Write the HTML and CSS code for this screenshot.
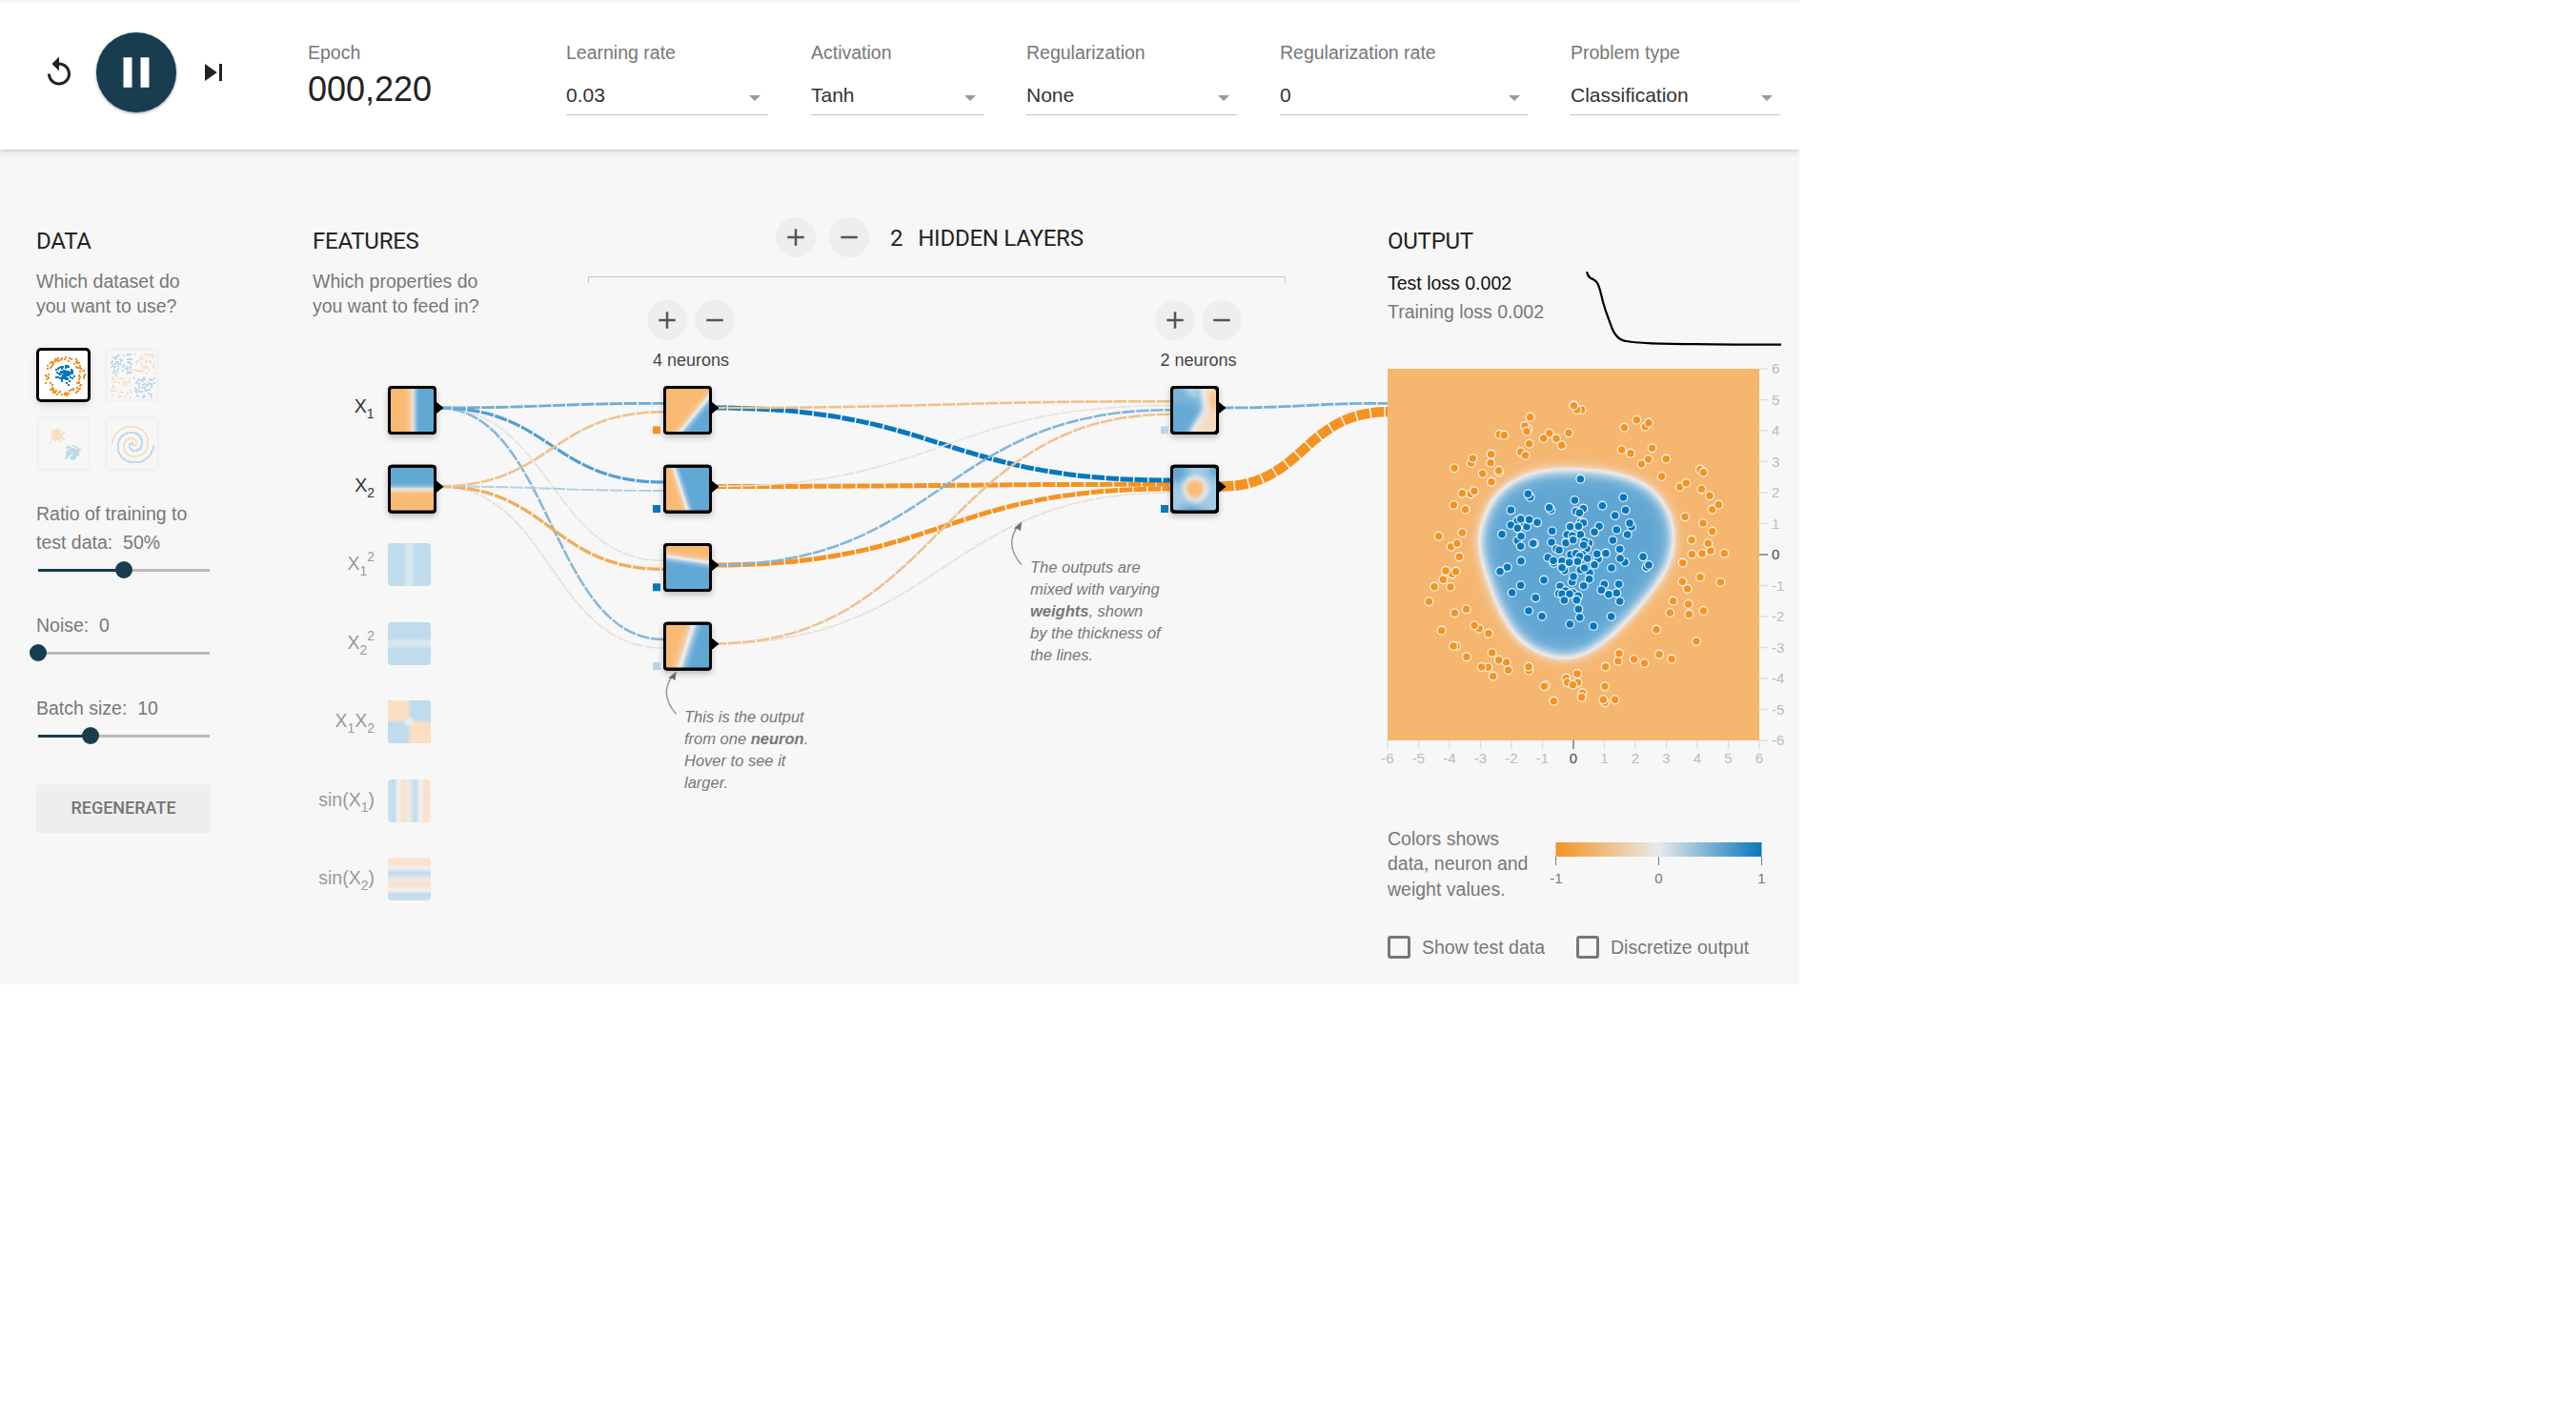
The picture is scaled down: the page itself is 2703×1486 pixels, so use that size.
FILE: index.html
```html
<!DOCTYPE html>
<html lang="en">
<head>
<meta charset="utf-8">
<title>Neural Network Playground</title>
<link rel="stylesheet" href="styles.css">
</head>
<body>
<div class="app">
  <header class="topbar">
    <div class="controls">
      <svg class="icon" viewBox="0 0 24 24"><path d="M12 5V1L7 6l5 5V7c3.31 0 6 2.69 6 6s-2.69 6-6 6-6-2.69-6-6H4c0 4.42 3.58 8 8 8s8-3.58 8-8-3.58-8-8-8z"/></svg>
      <div class="play"><svg viewBox="0 0 24 24"><path d="M6 19h4V5H6v14zm8-14v14h4V5h-4z"/></svg></div>
      <svg class="icon" viewBox="0 0 24 24"><path d="M6 18l8.5-6L6 6v12zM16 6v12h2V6h-2z"/></svg>
    </div>
    <div class="epoch"><span class="label">Epoch</span><span class="count">000,220</span></div>
    <div class="field f-rate"><span class="label">Learning rate</span><div class="select">0.03</div></div>
    <div class="field f-act"><span class="label">Activation</span><div class="select">Tanh</div></div>
    <div class="field f-reg"><span class="label">Regularization</span><div class="select">None</div></div>
    <div class="field f-regrate"><span class="label">Regularization rate</span><div class="select">0</div></div>
    <div class="field f-problem"><span class="label">Problem type</span><div class="select">Classification</div></div>
  </header>

  <main class="main">
    <svg class="network" viewBox="0 157 1456 876">
      <defs>
        <linearGradient id="gx1"><stop offset=".3" stop-color="#f9ba74"/><stop offset=".42" stop-color="#f4c690"/><stop offset=".52" stop-color="#eedfd0"/><stop offset=".57" stop-color="#a5cbe3"/><stop offset=".65" stop-color="#62a8d5"/></linearGradient>
        <linearGradient id="gx2" x2="0" y2="1"><stop offset=".37" stop-color="#62a8d5"/><stop offset=".44" stop-color="#90bfdd"/><stop offset=".5" stop-color="#e6e4e0"/><stop offset=".56" stop-color="#f3cfa4"/><stop offset=".63" stop-color="#f9ba74"/></linearGradient>
        <linearGradient id="gsq"><stop offset=".37" stop-color="#bfdbec"/><stop offset=".44" stop-color="#d7e7ee"/><stop offset=".55" stop-color="#d7e7ee"/><stop offset=".63" stop-color="#bfdbec"/></linearGradient>
        <linearGradient id="gsq2" x2="0" y2="1"><stop offset=".37" stop-color="#bfdbec"/><stop offset=".44" stop-color="#d7e7ee"/><stop offset=".55" stop-color="#d7e7ee"/><stop offset=".63" stop-color="#bfdbec"/></linearGradient>
        <linearGradient id="gsin"><stop offset="0" stop-color="#cee1ed"/><stop offset=".14" stop-color="#bfdbec"/><stop offset=".24" stop-color="#f2f2f2"/><stop offset=".35" stop-color="#fae0c7"/><stop offset=".49" stop-color="#efeae4"/><stop offset=".64" stop-color="#bfdbec"/><stop offset=".75" stop-color="#eff2f3"/><stop offset=".87" stop-color="#fae0c7"/><stop offset="1" stop-color="#f8e6d4"/></linearGradient>
        <linearGradient id="gsin2" x1="0" x2="0" y1="1" y2="0"><stop offset="0" stop-color="#cee1ed"/><stop offset=".14" stop-color="#bfdbec"/><stop offset=".24" stop-color="#f2f2f2"/><stop offset=".35" stop-color="#fae0c7"/><stop offset=".49" stop-color="#efeae4"/><stop offset=".64" stop-color="#bfdbec"/><stop offset=".75" stop-color="#eff2f3"/><stop offset=".87" stop-color="#fae0c7"/><stop offset="1" stop-color="#f8e6d4"/></linearGradient>
        <linearGradient id="gn1" gradientUnits="userSpaceOnUse" x1="24.5" y1="22" x2="35.5" y2="31"><stop offset="0" stop-color="#f9ba74"/><stop offset=".3" stop-color="#f4caa0"/><stop offset=".5" stop-color="#efefef"/><stop offset=".75" stop-color="#8dbede"/><stop offset="1" stop-color="#62a8d5"/></linearGradient>
        <linearGradient id="gn2" gradientUnits="userSpaceOnUse" x1="9" y1="24.5" x2="21.5" y2="20.5"><stop offset="0" stop-color="#f9ba74"/><stop offset=".3" stop-color="#f4caa0"/><stop offset=".5" stop-color="#efefef"/><stop offset=".75" stop-color="#8dbede"/><stop offset="1" stop-color="#62a8d5"/></linearGradient>
        <linearGradient id="gn3" gradientUnits="userSpaceOnUse" x1="23.5" y1="7" x2="21.5" y2="21"><stop offset="0" stop-color="#f9ba74"/><stop offset=".3" stop-color="#f4caa0"/><stop offset=".5" stop-color="#efefef"/><stop offset=".75" stop-color="#8dbede"/><stop offset="1" stop-color="#62a8d5"/></linearGradient>
        <linearGradient id="gn4" gradientUnits="userSpaceOnUse" x1="12" y1="19" x2="31" y2="25"><stop offset="0" stop-color="#f9ba74"/><stop offset=".3" stop-color="#f4caa0"/><stop offset=".5" stop-color="#efefef"/><stop offset=".75" stop-color="#8dbede"/><stop offset="1" stop-color="#62a8d5"/></linearGradient>
        <clipPath id="tile"><rect width="45" height="45" rx="3"/></clipPath>
        <filter id="b1" x="-50%" y="-50%" width="200%" height="200%"><feGaussianBlur stdDeviation="1.2"/></filter>
        <filter id="b2" x="-50%" y="-50%" width="200%" height="200%"><feGaussianBlur stdDeviation="2.4"/></filter>
        <filter id="b4" x="-80%" y="-80%" width="260%" height="260%"><feGaussianBlur stdDeviation="5"/></filter>
        <filter id="drop" x="-30%" y="-30%" width="160%" height="170%"><feDropShadow dx="0" dy="3" stdDeviation="3" flood-opacity=".25"/></filter>
        <g id="frame"><rect x="-1.5" y="-1.5" width="48" height="48" rx="3" fill="none" stroke="#000" stroke-width="3"/><path d="M47.500 13.500l8 6.500-8 6.500z"/></g>
        <rect id="base" x="-3" y="-3" width="51" height="51" rx="4" filter="url(#drop)"/>
      </defs>

      <g class="links">
        <path d="M1281 510.5C1368 510.5 1368 432.3 1456 432.3" stroke="#f59322" stroke-width="10.5"/>
        <path d="M1281 428C1368 428 1368 423.3 1456 423.3" stroke="#74b0d6" stroke-width="2.8"/>
        <path d="M749 675.5C989 675.5 989 517 1228 517" stroke="#eadfd3" stroke-width="1.7"/>
        <path d="M749 593C989 593 989 513 1228 513" stroke="#f59322" stroke-width="5"/>
        <path d="M749 510.5C989 510.5 989 508.3 1228 508.3" stroke="#f59322" stroke-width="5"/>
        <path d="M749 428C989 428 989 504 1228 504" stroke="#0877bd" stroke-width="5"/>
        <path d="M749 675.5C989 675.5 989 434.7 1228 434.7" stroke="#efc290" stroke-width="2.6"/>
        <path d="M749 593C989 593 989 430.2 1228 430.2" stroke="#82b6d8" stroke-width="2.6"/>
        <path d="M749 510.5C989 510.5 989 425.6 1228 425.6" stroke="#e9e0d6" stroke-width="1.6"/>
        <path d="M749 428C989 428 989 421.2 1228 421.2" stroke="#efc087" stroke-width="2.6"/>
        <path d="M460 510.5C578 510.5 578 680 696 680" stroke="#eadfd3" stroke-width="1.7"/>
        <path d="M460 428C578 428 578 671 696 671" stroke="#85b8d9" stroke-width="2.6"/>
        <path d="M460 510.5C578 510.5 578 597.3 696 597.3" stroke="#f2ab5c" stroke-width="3.3"/>
        <path d="M460 428C578 428 578 588.3 696 588.3" stroke="#e9e0d6" stroke-width="1.6"/>
        <path d="M460 510.5C578 510.5 578 515 696 515" stroke="#b0cfe1" stroke-width="1.9"/>
        <path d="M460 428C578 428 578 506 696 506" stroke="#519fd0" stroke-width="3.2"/>
        <path d="M460 510.5C578 510.5 578 432.3 696 432.3" stroke="#eec290" stroke-width="2.6"/>
        <path d="M460 428C578 428 578 423.3 696 423.3" stroke="#6eadd5" stroke-width="2.8"/>
      </g>

      <g transform="translate(410 408)"><use href="#base"/><rect width="45" height="45" fill="url(#gx1)"/><use href="#frame"/></g>
      <g transform="translate(410 490.7)"><use href="#base"/><rect width="45" height="45" fill="url(#gx2)"/><use href="#frame"/></g>
      <rect x="407" y="570" width="45" height="45" rx="4" fill="url(#gsq)"/>
      <rect x="407" y="653" width="45" height="45" rx="4" fill="url(#gsq2)"/>
      <g transform="translate(407 735)" clip-path="url(#tile)">
        <rect width="45" height="45" fill="#bfdbec"/>
        <g filter="url(#b1)"><path d="M-5-5h27.500v27.500h-27.500zM22.500 22.500h28v28h-28z" fill="#fadfc2"/></g>
        <circle cx="22.500" cy="22.500" r="4.500" fill="#ecebea" filter="url(#b1)"/>
      </g>
      <rect x="407" y="818" width="45" height="45" rx="4" fill="url(#gsin)"/>
      <rect x="407" y="900" width="45" height="45" rx="4" fill="url(#gsin2)"/>

      <g class="feature-names">
        <text x="392.500" y="432.700" class="on">X<tspan dy="6" class="small">1</tspan></text>
        <text x="393" y="515.700" class="on">X<tspan dy="6" class="small">2</tspan></text>
        <text x="393" y="598">X<tspan dy="6" class="small">1</tspan><tspan dy="-15" class="small">2</tspan></text>
        <text x="393" y="681">X<tspan dy="6" class="small">2</tspan><tspan dy="-15" class="small">2</tspan></text>
        <text x="393" y="763">X<tspan dy="6" class="small">1</tspan><tspan dy="-6">X</tspan><tspan dy="6" class="small">2</tspan></text>
        <text x="393" y="846">sin(X<tspan dy="6" class="small">1</tspan><tspan dy="-6">)</tspan></text>
        <text x="393" y="928">sin(X<tspan dy="6" class="small">2</tspan><tspan dy="-6">)</tspan></text>
      </g>

      <g transform="translate(699 408)"><use href="#base"/><rect width="45" height="45" fill="url(#gn1)"/><use href="#frame"/></g>
      <g transform="translate(699 490.700)"><use href="#base"/><rect width="45" height="45" fill="url(#gn2)"/><use href="#frame"/></g>
      <g transform="translate(699 573)"><use href="#base"/><rect width="45" height="45" fill="url(#gn3)"/><use href="#frame"/></g>
      <g transform="translate(699 655.700)"><use href="#base"/><rect width="45" height="45" fill="url(#gn4)"/><use href="#frame"/></g>

      <g transform="translate(1231 408)"><use href="#base"/>
        <g clip-path="url(#tile)"><rect width="45" height="45" fill="#f4dcc0"/>
          <ellipse cx="42" cy="13" rx="5" ry="10" fill="#f8c48a" filter="url(#b2)"/>
          <path d="M-9-9H31Q32 8 35 18Q34 26 24 40L18 54H-9z" fill="#eceded" stroke="#eceded" stroke-width="4" filter="url(#b2)"/>
          <path d="M-9-9H27Q27 8 31 19Q29 27 19 40L14 54H-9z" fill="#79b3d9" filter="url(#b2)"/>
          <path d="M-9 20Q12 10 27 21Q20 32 10 52H-9z" fill="#66aad6" filter="url(#b2)"/>
          <path d="M8-6H26V10Q14 9 8-6z" fill="#b3d2e5" filter="url(#b2)"/></g>
        <use href="#frame"/></g>
      <g transform="translate(1231 490.700)"><use href="#base"/>
        <g clip-path="url(#tile)"><rect width="45" height="45" fill="#a3cbe4"/>
          <circle cx="2" cy="3" r="13" fill="#5ca5d4" filter="url(#b4)"/>
          <circle cx="46" cy="2" r="8" fill="#4c9ccf" filter="url(#b4)"/>
          <ellipse cx="19" cy="48" rx="13" ry="7" fill="#4c9ccf" filter="url(#b4)"/>
          <ellipse cx="23.500" cy="22.500" rx="13.500" ry="14" fill="#eceded" filter="url(#b2)"/>
          <path d="M15 17Q23 11 31 17Q33 22 28 30Q22 34 17 29Q13 22 15 17z" fill="#fab56a" filter="url(#b2)"/>
          <ellipse cx="23" cy="22" rx="6" ry="7" fill="#f9bd7d" filter="url(#b2)"/></g>
        <use href="#frame"/></g>

      <g class="biases">
        <rect x="685" y="447.300" width="8" height="8" fill="#f59322"/>
        <rect x="685" y="530" width="8" height="8" fill="#0877bd"/>
        <rect x="685" y="612.300" width="8" height="8" fill="#0877bd"/>
        <rect x="685" y="695" width="8" height="8" fill="#b9d3e2"/>
        <rect x="1218" y="447.300" width="8" height="8" fill="#bcd4e2"/>
        <rect x="1218" y="530" width="8" height="8" fill="#0877bd"/>
      </g>

      <g class="arrows">
        <path d="M709.500 749.500Q690.500 727 707 708"/><path class="head" d="M709.500 705l-1.500 9-2.500-2.300-4-.2z"/>
        <path d="M1072 592.700Q1053 571 1069 551"/><path class="head" d="M1072 548l-1.500 9-2.500-2.300-4-.2z"/>
      </g>
    </svg>

    <section class="data">
      <h2>DATA</h2>
      <p>Which dataset do<br>you want to use?</p>
      <div class="datasets">
        <svg class="dataset selected" id="set-circle" viewBox="0 0 51 51"></svg>
        <svg class="dataset" id="set-xor" viewBox="0 0 51 51"></svg>
        <svg class="dataset" id="set-gauss" viewBox="0 0 51 51"></svg>
        <svg class="dataset" id="set-spiral" viewBox="0 0 51 51"></svg>
      </div>
      <div class="param first"><span>Ratio of training to<br>test data:&nbsp; 50%</span>
        <div class="slider"><i class="fill" style="width:90px"></i><b></b></div></div>
      <div class="param"><span>Noise:&nbsp; 0</span>
        <div class="slider"><i class="fill" style="width:0"></i><b></b></div></div>
      <div class="param"><span>Batch size:&nbsp; 10</span>
        <div class="slider"><i class="fill" style="width:55px"></i><b></b></div></div>
      <button class="regen">REGENERATE</button>
    </section>

    <section class="features">
      <h2>FEATURES</h2>
      <p>Which properties do<br>you want to feed in?</p>
    </section>

    <section class="hidden">
      <div class="layer-controls">
        <span class="round"><svg viewBox="0 0 24 24"><path d="M19 13h-6v6h-2v-6H5v-2h6V5h2v6h6v2z"/></svg></span>
        <span class="round"><svg viewBox="0 0 24 24"><path d="M19 13H5v-2h14v2z"/></svg></span>
        <h2 class="layer-count">2</h2><h2 class="layer-title">HIDDEN LAYERS</h2>
      </div>
      <div class="bracket"></div>
      <div class="layers">
        <div class="layer">
          <div class="pair"><span class="round"><svg viewBox="0 0 24 24"><path d="M19 13h-6v6h-2v-6H5v-2h6V5h2v6h6v2z"/></svg></span><span class="round"><svg viewBox="0 0 24 24"><path d="M19 13H5v-2h14v2z"/></svg></span></div>
          <span>4 neurons</span>
        </div>
        <div class="layer last">
          <div class="pair"><span class="round"><svg viewBox="0 0 24 24"><path d="M19 13h-6v6h-2v-6H5v-2h6V5h2v6h6v2z"/></svg></span><span class="round"><svg viewBox="0 0 24 24"><path d="M19 13H5v-2h14v2z"/></svg></span></div>
          <span>2 neurons</span>
        </div>
      </div>
    </section>

    <div class="callout neuron-note">This is the output<br>from one <b>neuron</b>.<br>Hover to see it<br>larger.</div>
    <div class="callout weight-note">The outputs are<br>mixed with varying<br><b>weights</b>, shown<br>by the thickness of<br>the lines.</div>

    <section class="output">
      <h2>OUTPUT</h2>
      <div class="metrics">
        <div class="losses"><span class="test">Test loss 0.002</span><span>Training loss 0.002</span></div>
        <svg class="chart" viewBox="0 0 208 85"><path d="M1 3.300C1.500 6 2.500 8 4.700 9.700C8 11 10 12 11.300 14C13 16 14 19 14.500 21C16 26 17 31 18 34.700L21 44.700L27.700 63C29 66 30 68 31.500 69.500C34 73 37 75 41 75.800C46 77 55 77.800 69 78.300C110 79.300 160 79.600 205 79.700"/></svg>
      </div>
      <svg class="heatmap" viewBox="0 0 432 420">
        <defs>
          <filter id="ramp" filterUnits="userSpaceOnUse" x="0" y="0" width="390" height="390" color-interpolation-filters="sRGB">
            <feGaussianBlur stdDeviation="11"/>
            <feComponentTransfer>
              <feFuncR type="table" tableValues=".961 .961 .958 .949 .930 .730 .540 .430 .380"/>
              <feFuncG type="table" tableValues=".714 .722 .745 .795 .920 .830 .740 .680 .651"/>
              <feFuncB type="table" tableValues=".439 .455 .510 .640 .920 .900 .865 .842 .831"/>
            </feComponentTransfer>
          </filter>
        </defs>
        <g filter="url(#ramp)">
          <rect x="-60" y="-60" width="510" height="510" fill="#000"/>
          <path fill="#fff" d="M187 105C205 105 222 107 237 109C250 112 260 116 269 120C280 127 288 136 293 145C299 156 301 170 301 182C300 194 296 205 291 214C284 226 276 236 268 245C261 254 254 262 247 269C239 277 232 284 224 289C216 296 206 303 186 305C170 304 154 298 141 287C132 280 126 270 121 259C115 250 111 240 108 230C103 216 98 202 96 188C95 172 99 158 105 146C110 134 119 125 131 118C148 108 168 105 187 105z"/>
        </g>
        <g id="points" class="points"></g>
        <g id="axes" class="axes"></g>
      </svg>
      <div class="legend">
        <p>Colors shows<br>data, neuron and<br>weight values.</p>
        <svg viewBox="0 0 240 56">
          <defs><linearGradient id="scale"><stop offset="0" stop-color="#f59322"/><stop offset=".5" stop-color="#e8eaeb"/><stop offset="1" stop-color="#0877bd"/></linearGradient></defs>
          <rect x="12.500" y="3" width="216" height="15" fill="url(#scale)"/>
          <path d="M12.500 18v9M120.500 18v9M228.500 18v9" stroke="#777"/>
          <text x="13" y="46">-1</text><text x="120.500" y="46">0</text><text x="228.500" y="46">1</text>
        </svg>
      </div>
      <div class="checks"><label><i></i>Show test data</label><label><i></i>Discretize output</label></div>
    </section>
  </main>
</div>
<script src="plots.js"></script>
</body>
</html>
```
FILE: styles.css
```css
* { box-sizing: border-box; }
body {
  margin: 0;
  background: #fff;
  color: #777;
  font-family: "Liberation Sans", Arial, sans-serif;
  font-size: 19.5px;
}
h2, p { margin: 0; font-weight: 400; }
h2 {
  font-family: Roboto, sans-serif;
  font-size: 24px;
  font-weight: 400;
  line-height: 28px;
  letter-spacing: -.25px;
  color: #222;
}
p { line-height: 26.2px; }
svg { display: block; }
.app { width: 1888px; }

.topbar {
  position: relative;
  z-index: 2;
  display: flex;
  height: 157px;
  background: linear-gradient(#f1f1f1, #fff 4px);
  box-shadow: 0 1px 2px rgba(0,0,0,.12), 0 2px 9px rgba(0,0,0,.12);
  clip-path: inset(0 0 -16px 0);
}
.controls { display: flex; align-items: center; height: 152px; margin-left: 44px; width: 279px; }
.icon { width: 36px; height: 36px; fill: #222; }
.play {
  display: flex; align-items: center; justify-content: center;
  width: 84px; height: 84px; margin: 0 21px;
  border-radius: 50%;
  background: #183d4e;
  box-shadow: 0 1px 3px rgba(0,0,0,.4);
}
.play svg { width: 54px; height: 54px; fill: #fff; }
.label { display: block; line-height: 26px; padding-top: 42px; }
.epoch { width: 271px; }
.count { display: block; color: #222; font-size: 36px; line-height: 40px; margin-top: 6px; }
.select {
  display: flex; justify-content: space-between; align-items: center;
  height: 35px; margin-top: 18px;
  border-bottom: 1px solid #c4c4c4;
  color: #333; font-size: 21px; line-height: 24px; padding-bottom: 6px;
}
.select::after {
  content: ""; margin: 5px 8px 0 0;
  border: 6px solid transparent; border-top-color: #999; border-bottom: 0;
}
.f-rate { width: 212px; margin-right: 45px; }
.f-act { width: 181px; margin-right: 45px; }
.f-reg { width: 221px; margin-right: 45px; }
.f-regrate { width: 260px; margin-right: 45px; }
.f-problem { width: 220px; }

.main {
  position: relative;
  display: flex;
  height: 876px;
  padding-left: 38px;
  background: #f7f7f7;
}
.network { position: absolute; left: 0; top: 0; width: 1456px; height: 876px; }
.links path { fill: none; stroke-dasharray: 13.5 1.5; }
.feature-names text { font-size: 19.5px; fill: #999; text-anchor: end; }
.feature-names .on { fill: #333; }
.feature-names .small { font-size: 14px; }
.arrows path { fill: none; stroke: #999; stroke-width: 1.5; }
.arrows .head { fill: #666; stroke: #777; stroke-width: .5; }

.data { width: 183px; padding-top: 82px; margin-right: 107px; }
.data p, .features p { margin-top: 15px; white-space: nowrap; }
.datasets { display: grid; grid-template-columns: 57px 57px; gap: 15px; margin-top: 31px; }
.dataset { width: 57px; height: 57px; border: 3px solid #e2e2e2; border-radius: 5px; opacity: .22; }
.dataset.selected { border-color: #000; background: #fff; opacity: 1; box-shadow: 0 3px 8px rgba(0,0,0,.13); }
.param { margin-top: 34px; line-height: 30px; white-space: nowrap; }
.param.first { margin-top: 30px; }
.param span { display: block; }
.slider {
  display: flex; align-items: center;
  width: 180px; height: 18px; margin: 5px 0 0 2px;
  background: linear-gradient(#bbb, #bbb) 0 50% / 100% 3px no-repeat;
}
.fill { height: 3px; background: #183d4e; flex: none; }
.slider b { width: 18px; height: 18px; margin-left: -9px; border-radius: 50%; background: #183d4e; }
.regen {
  display: block; width: 183px; height: 51px; margin-top: 42px; padding: 0;
  border: 0; border-radius: 3px; background: #eee; color: #757575;
  font: 500 18px/49px Roboto, sans-serif; padding-bottom: 2px;
}

.features { width: 289px; padding-top: 82px; }

.hidden { width: 732px; padding-top: 71px; margin-right: 107px; }
.layer-controls { display: flex; align-items: center; height: 42px; gap: 14px; padding-left: 197px; }
.layer-count { margin: 1px 2px 0 8px; }
.layer-title { margin-top: 1px; }
.round {
  display: flex; align-items: center; justify-content: center;
  width: 42px; height: 42px; border-radius: 50%; background: #eee;
}
.round svg { width: 30px; height: 30px; fill: #555; }
.bracket { height: 7px; margin-top: 20px; border: 1px solid #c5c5c5; border-bottom: 0; }
.layers { display: flex; justify-content: space-between; margin: 18px 46px 0 62px; }
.layer { width: 92px; text-align: center; font-size: 18px; line-height: 24px; color: #444; }
.layer.last { width: 91px; }
.pair { display: flex; justify-content: space-between; margin-bottom: 9px; }

.callout { position: absolute; font-size: 16.5px; font-style: italic; line-height: 23px; white-space: nowrap; }
.neuron-note { left: 718px; top: 584px; }
.weight-note { left: 1081px; top: 427px; }

.output { position: relative; width: 432px; padding-top: 82px; }
.metrics { display: flex; height: 105px; margin-top: 15px; }
.losses { width: 208px; line-height: 30px; white-space: nowrap; }
.losses span { display: block; }
.losses .test { color: #111; }
.chart { width: 208px; height: 85px; }
.chart path { fill: none; stroke: #000; stroke-width: 2.2; }
.heatmap { width: 432px; height: 420px; overflow: visible; }
.points circle { stroke: #fff; stroke-width: 1.3; stroke-opacity: .85; }
.axes text, .legend text { font-size: 15px; text-anchor: middle; }
.axes text { fill: #bbb; }
.axes .side { text-anchor: start; }
.axes .zero { fill: #444; }
.axes line { stroke: #ddd; stroke-width: 1.4; }
.axes line.origin { stroke: #999; stroke-width: 2; }
.legend { display: flex; margin-top: 60px; }
.legend p { width: 164px; line-height: 26.4px; white-space: nowrap; }
.legend svg { width: 240px; height: 56px; margin-top: 14px; }
.legend text { fill: #777; }
.checks { display: flex; margin-top: 36px; }
.checks label { display: flex; align-items: center; width: 198px; height: 24px; white-space: nowrap; }
.checks i { width: 24px; height: 24px; margin-right: 12px; border: 3px solid #777; border-radius: 3px; }
```
FILE: plots.js
```js
const NS = "http://www.w3.org/2000/svg";
const ORANGE = "#f59322", BLUE = "#0877bd";

function add(parent, name, attrs, text) {
  const el = document.createElementNS(NS, name);
  for (const k in attrs) el.setAttribute(k, attrs[k]);
  if (text !== undefined) el.textContent = text;
  parent.appendChild(el);
}

// Samples, as x,y pairs in thirds of a pixel from the plot's own margin corner.
const outer = "634,167 659,180 644,180 634,167 497,203 490,240 480,231 486,248 400,258 415,260 557,254 539,270 579,271 618,253 596,292 494,287 467,313 482,324 374,320 372,347 311,348 316,333 258,364 347,381 399,377 398,371 375,407 283,443 310,445 321,436 256,480 293,494 283,567 209,578 248,611 267,601 274,643 832,212 859,233 870,221 793,236 785,306 813,317 881,301 925,335 869,336 847,351 911,390 1032,368 1042,377 968,423 988,411 1036,430 1062,451 1070,494 1090,479 984,517 1041,537 1070,563 1005,590 1065,624 1057,601 1038,633 1006,635 1108,632 977,662 251,697 231,687 263,689 223,715 195,737 246,738 178,784 296,808 259,820 336,869 321,859 366,884 218,875 264,924 255,924 297,958 377,945 422,975 398,968 428,1000 364,991 344,990 380,1019 493,1001 492,989 546,1047 541,1051 571,1097 610,1025 614,1039 645,1011 646,1039 631,1046 661,1072 659,1085 734,989 732,1051 732,1102 727,1093 764,1093 774,971 777,947 824,966 856,978 903,950 942,965 894,872 1020,909 937,819 947,782 976,721 992,744 995,792 997,824 1042,813 1032,707 1096,723";
const inner = "655,398 497,455 490,445 637,465 790,456 724,482 562,495 557,488 436,496 664,491 641,500 652,505 797,496 764,513 456,530 478,538 467,524 486,548 494,526 519,535 436,543 457,553 408,572 457,592 468,578 467,610 510,601 506,601 566,562 564,597 623,548 655,535 664,536 649,547 714,547 699,565 769,558 816,549 810,537 803,573 757,591 779,619 613,573 655,573 630,577 609,599 632,590 682,600 668,595 579,618 588,622 675,617 665,606 711,650 707,634 735,632 624,636 641,632 662,636 653,641 677,648 795,660 780,648 852,643 468,656 553,645 571,663 570,655 597,656 646,658 620,661 699,668 425,676 402,689 605,686 597,677 655,684 684,694 668,678 753,678 863,676 870,669 467,733 440,756 540,716 514,772 492,813 534,830 591,736 587,758 608,750 597,760 631,756 621,760 604,780 629,722 633,705 648,766 643,779 665,734 649,808 653,834 622,855 696,861 752,831 779,783 776,729 769,757 730,730 721,748 744,761 683,713";

const points = document.getElementById("points");
for (const [list, fill] of [[outer, ORANGE], [inner, BLUE]])
  for (const p of list.split(" ")) {
    const [x, y] = p.split(",");
    add(points, "circle", { cx: (x - 48) / 3, cy: (y - 51) / 3, r: 4.4, fill });
  }

const axes = document.getElementById("axes");
for (let v = -6; v <= 6; v++) {
  const p = 195 + v * 32.5, q = 195 - v * 32.5;
  const line = v ? "tick" : "origin", text = v ? "" : " zero";
  add(axes, "line", { x1: p, x2: p, y1: 390, y2: 399, class: line });
  add(axes, "text", { x: p, y: 413.5, class: text.trim() }, v);
  add(axes, "line", { x1: 390, x2: 399, y1: q, y2: q, class: line });
  add(axes, "text", { x: 403, y: q + 5, class: "side" + text }, v);
}

// Dataset thumbnails, drawn from a small repeatable generator.
let seed = 7;
const rnd = () => (seed = (seed * 16807) % 2147483647) / 2147483647;
const gauss = () => rnd() + rnd() + rnd() + rnd() - 2;
const dot = (id, x, y, fill) =>
  add(document.getElementById(id), "rect", { x: Math.round(x) - 1, y: Math.round(y) - 1, width: 2, height: 2, fill });

for (let i = 0; i < 100; i++) {
  let a = rnd() * 6.2832, r = rnd() * 11;
  dot("set-circle", 26.5 + r * Math.cos(a), 26.5 + r * Math.sin(a), BLUE);
  a = rnd() * 6.2832; r = 15.5 + rnd() * 6;
  dot("set-circle", 26.5 + r * Math.cos(a), 26.5 + r * Math.sin(a), ORANGE);
}
for (let i = 0; i < 210; i++) {
  const x = rnd() * 44 - 22, y = rnd() * 44 - 22;
  dot("set-xor", 26.5 + x + Math.sign(x), 26.5 + y + Math.sign(y), x * y > 0 ? BLUE : ORANGE);
}
for (let i = 0; i < 140; i++) {
  dot("set-gauss", 19 + gauss() * 4.8, 17 + gauss() * 4.5, ORANGE);
  dot("set-gauss", 35 + gauss() * 4.8, 35 + gauss() * 5, BLUE);
}
for (let i = 0; i < 150; i++) {
  const r = i / 150 * 22, t = 1.75 * i / 150 * 6.2832;
  dot("set-spiral", 26.5 + r * Math.sin(t + 3.1416), 26.5 + r * Math.cos(t + 3.1416), BLUE);
  dot("set-spiral", 26.5 + r * Math.sin(t), 26.5 + r * Math.cos(t), ORANGE);
}
```
